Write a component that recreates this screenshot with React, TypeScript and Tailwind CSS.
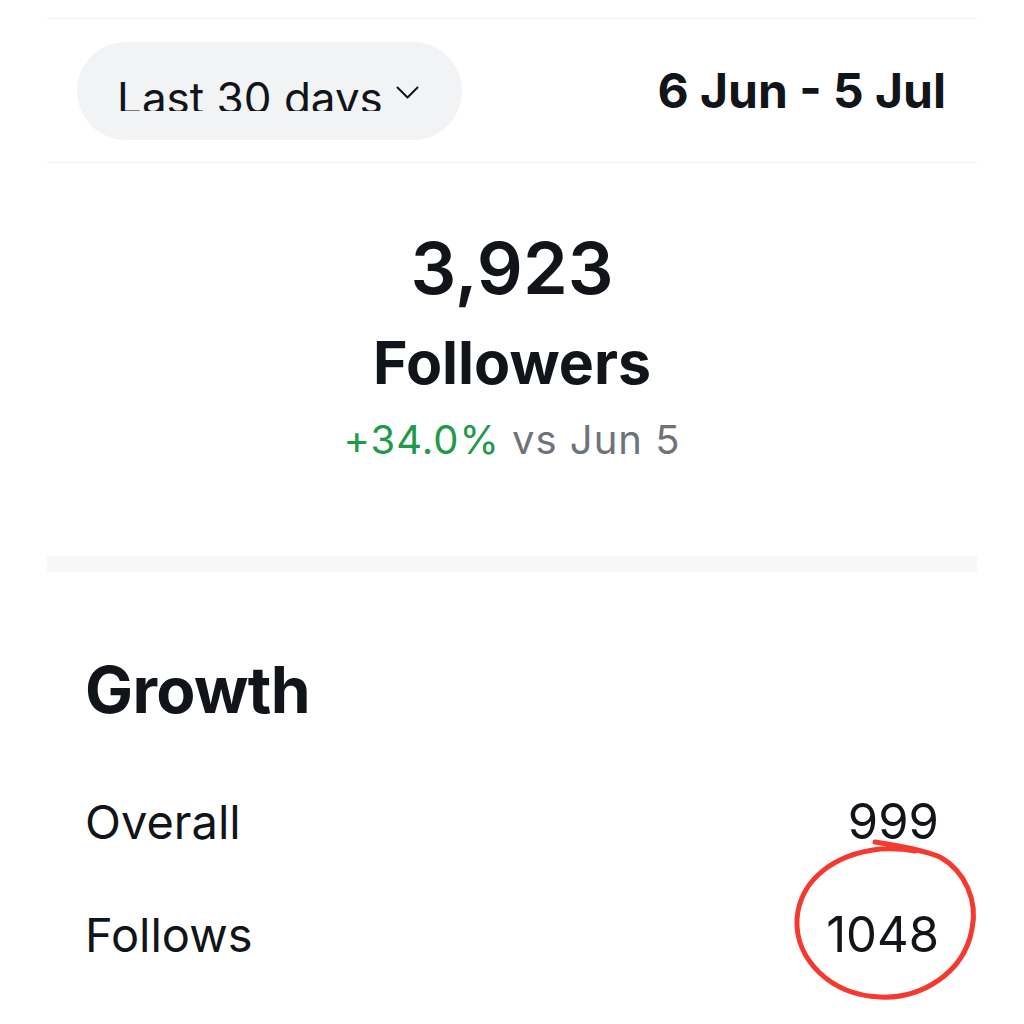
import React from "react";

const ink = "text-[#111418]";

function Chevron() {
  return (
    <svg width="23" height="13" viewBox="0 0 23 13" fill="none" className="mt-[10px] shrink-0">
      <path d="M1.5 1.5 L11.5 11.5 L21.5 1.5" stroke="#111418" strokeWidth="2" strokeLinecap="round" strokeLinejoin="round" />
    </svg>
  );
}

function Scribble() {
  // hand drawn red ring round the follows count
  return (
    <svg
      className="absolute left-[-46px] top-[-81px] pointer-events-none"
      width="210"
      height="185"
      viewBox="0 0 210 185"
      fill="none"
    >
      <path
        d="M95 13 C115 16 140 20 160 28 C185 42 198 72 192 100 C184 145 140 170 100 168 C50 166 15 130 17 90 C20 50 55 25 100 20 C115 19 125 20 135 22"
        stroke="#f43a30"
        strokeWidth="5"
        strokeLinecap="round"
        strokeLinejoin="round"
      />
    </svg>
  );
}

function Row({ label, value, marked }: { label: string; value: string; marked?: boolean }) {
  return (
    <div className="flex items-start justify-between">
      <span className="text-[47px] leading-none">{label}</span>
      <span className="relative text-[49px] leading-none -mt-[1px]">
        {value}
        {marked && <Scribble />}
      </span>
    </div>
  );
}

export default function App() {
  return (
    <div
      className={`w-full h-[1024px] bg-white overflow-hidden ${ink}`}
      style={{ fontFamily: "Inter, 'Liberation Sans', sans-serif" }}
    >
      <div className="ml-[47px] w-[930px] pt-[18px]">
        <div className="border-t border-[#f0f1f2]" />

        {/* range picker */}
        <div className="flex items-center justify-between h-[144px] pl-[30px] pr-[31px] border-b border-[#f0f1f2]">
          <div className="h-[98px] w-[385px] rounded-full bg-[#f2f3f5] pl-[40px]">
            <div className="h-[69px] overflow-hidden pt-[34px] flex items-start gap-[13px]">
              <span className="text-[44px] leading-none whitespace-nowrap">Last 30 days</span>
              <Chevron />
            </div>
          </div>
          <span className="text-[48px] leading-none font-bold">6 Jun - 5 Jul</span>
        </div>

        {/* followers total */}
        <div className="flex flex-col items-center pt-[69px] pb-[96px]">
          <span className="text-[72px] leading-none font-semibold">3,923</span>
          <span className="mt-[29px] text-[59px] leading-none font-bold">Followers</span>
          <span className="mt-[28px] text-[40px] leading-none tracking-[0.025em]">
            <span className="text-[#1f9a4a]">+34.0%</span>
            <span className="text-[#6e737a]"> vs Jun 5</span>
          </span>
        </div>

        <div className="h-[16px] bg-[#f6f7f7]" />

        {/* growth */}
        <div className="pl-[38px] pr-[38px] pt-[86px]">
          <h2 className="text-[64px] leading-none font-bold tracking-[-0.01em]">Growth</h2>
          <div className="mt-[76px]">
            <Row label="Overall" value="999" />
          </div>
          <div className="mt-[65px]">
            <Row label="Follows" value="1048" marked />
          </div>
        </div>
      </div>
    </div>
  );
}
